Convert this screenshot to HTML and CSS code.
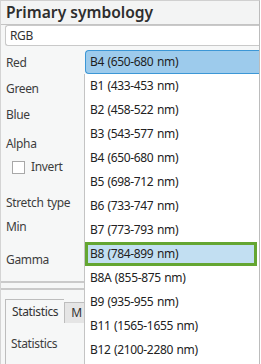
FILE: index.html
```html
<!DOCTYPE html>
<html>
<head>
<meta charset="utf-8">
<link rel="stylesheet" href="styles.css">
</head>
<body>
<div class="panel">
  <div class="header">Primary symbology</div>
  <div class="combo">RGB</div>
  <div class="fields">
    <div class="label l-red">Red</div>
    <div class="label l-green">Green</div>
    <div class="label l-blue">Blue</div>
    <div class="label l-alpha">Alpha</div>
    <div class="check-row"><span class="checkbox"></span><span class="label">Invert</span></div>
    <div class="label l-stretch">Stretch type</div>
    <div class="label l-min">Min</div>
    <div class="label l-gamma">Gamma</div>
  </div>
  <div class="divider"></div>
  <div class="divider second"></div>
  <div class="tabs">
    <div class="tab active">Statistics</div>
    <div class="tab">M</div>
  </div>
  <div class="tab-body">
    <div class="label">Statistics</div>
  </div>

  <div class="dropdown">
    <div class="selected">B4 (650-680 nm)</div>
    <ul class="list">
      <li>B1 (433-453 nm)</li>
      <li>B2 (458-522 nm)</li>
      <li>B3 (543-577 nm)</li>
      <li>B4 (650-680 nm)</li>
      <li>B5 (698-712 nm)</li>
      <li>B6 (733-747 nm)</li>
      <li>B7 (773-793 nm)</li>
      <li class="hover">B8 (784-899 nm)</li>
      <li>B8A (855-875 nm)</li>
      <li>B9 (935-955 nm)</li>
      <li>B11 (1565-1655 nm)</li>
      <li>B12 (2100-2280 nm)</li>
    </ul>
  </div>
</div>
</body>
</html>
```

FILE: styles.css
```css
* { box-sizing: border-box; }
html, body {
  margin: 0;
  padding: 0;
  background: #ffffff;
}
body {
  width: 261px;
  height: 364px;
  overflow: hidden;
  font-family: "Noto Sans", "Open Sans", sans-serif;
  font-size: 12px;
  letter-spacing: -0.35px;
  word-spacing: 0.8px;
  color: #333333;
}
.panel {
  position: relative;
  width: 260px;
  height: 364px;
  background: #f6f7f7;
  border-left: 1px solid #d4d4d4;
  border-right: 1px solid #bcbcbc;
  border-top: 1px solid #d0d0d0;
  overflow: hidden;
}
.header {
  height: 24px;
  padding-left: 5px;
  font-size: 15.6px;
  letter-spacing: 0;
  word-spacing: 0;
  font-weight: 600;
  line-height: 22px;
  color: #2e2e2e;
  background: #f3f4f4;
  border-bottom: 1px solid #c4c4c4;
}
.combo {
  margin: 0 0 0 4px;
  height: 21px;
  background: #ffffff;
  border: 1px solid #c9c9c9;
  border-right: none;
  border-radius: 3px 0 0 3px;
  padding-left: 4px;
  line-height: 19px;
  color: #333;
}
.fields {
  padding-left: 5px;
  display: flex;
  flex-direction: column;
}
.label {
  line-height: 16px;
  color: #3d3d3d;
}
.l-red { margin-top: 9px; }
.l-green { margin-top: 10px; }
.l-blue { margin-top: 10px; }
.l-alpha { margin-top: 13px; }
.check-row {
  display: flex;
  align-items: center;
  gap: 6px;
  margin-top: 7px;
  padding-left: 6px;
}
.checkbox {
  width: 13px;
  height: 13px;
  border: 1px solid #a8a8a8;
  background: #ffffff;
}
.l-stretch { margin-top: 20px; }
.l-min { margin-top: 8px; }
.l-gamma { margin-top: 17px; }
.divider {
  margin-top: 13px;
  height: 2px;
  background: #cacaca;
}
.divider.second { margin-top: 5px; }
.tabs {
  display: flex;
  align-items: flex-end;
  margin-top: 9px;
  padding-left: 4px;
}
.tab {
  height: 21px;
  padding: 0 6px;
  line-height: 19px;
  border: 1px solid #bdbdbd;
  border-bottom: none;
  background: #e5e5e5;
  color: #333;
}
.tab.active {
  height: 24px;
  line-height: 23px;
  background: #f6f7f7;
  border-right: none;
}
.tab-body {
  margin-left: 4px;
  border-left: 1px solid #bdbdbd;
  height: 60px;
  padding: 13px 0 0 5px;
}
.dropdown {
  position: absolute;
  left: 83px;
  top: 49px;
  width: 176px;
  height: 320px;
}
.selected {
  height: 24px;
  margin-left: 1px;
  background: #9dcbec;
  border: 1px solid #3c97d6;
  border-right: none;
  border-radius: 4px 0 0 4px;
  padding-left: 4px;
  line-height: 22px;
  color: #1e1e1e;
}
.list {
  list-style: none;
  margin: 0;
  padding: 0;
  background: #ffffff;
  border-left: 1px solid #c4c4c4;
  height: 300px;
}
.list li {
  height: 24px;
  line-height: 24px;
  padding-left: 5px;
  color: #222;
}
.list li.hover {
  background: #c2dff2;
  outline: 3px solid #64a632;
  outline-offset: -3px;
  margin-right: 3px;
}
```
